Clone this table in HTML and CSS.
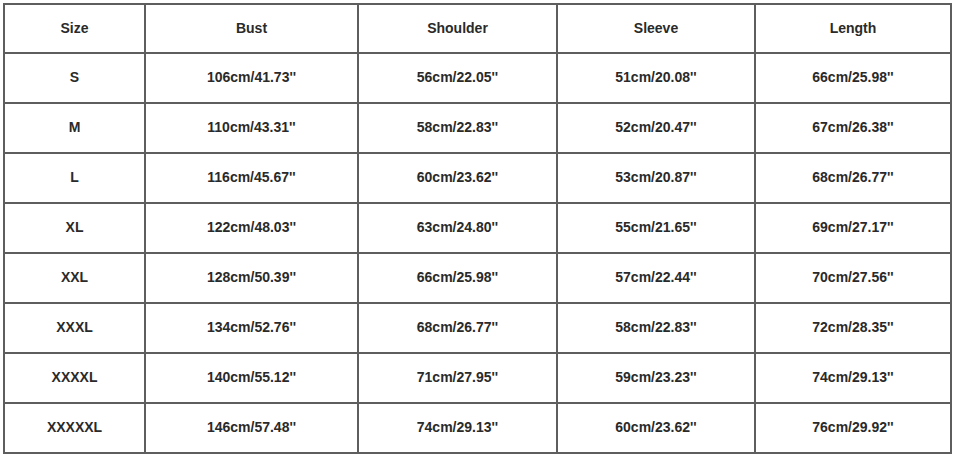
FILE: index.html
```html
<!DOCTYPE html>
<html>
<head>
<meta charset="utf-8">
<link rel="stylesheet" href="styles.css">
</head>
<body>
<div class="chart">
  <div class="cell">Size</div><div class="cell">Bust</div><div class="cell">Shoulder</div><div class="cell">Sleeve</div><div class="cell">Length</div>
  <div class="cell">S</div><div class="cell">106cm/41.73''</div><div class="cell">56cm/22.05''</div><div class="cell">51cm/20.08''</div><div class="cell">66cm/25.98''</div>
  <div class="cell">M</div><div class="cell">110cm/43.31''</div><div class="cell">58cm/22.83''</div><div class="cell">52cm/20.47''</div><div class="cell">67cm/26.38''</div>
  <div class="cell">L</div><div class="cell">116cm/45.67''</div><div class="cell">60cm/23.62''</div><div class="cell">53cm/20.87''</div><div class="cell">68cm/26.77''</div>
  <div class="cell">XL</div><div class="cell">122cm/48.03''</div><div class="cell">63cm/24.80''</div><div class="cell">55cm/21.65''</div><div class="cell">69cm/27.17''</div>
  <div class="cell">XXL</div><div class="cell">128cm/50.39''</div><div class="cell">66cm/25.98''</div><div class="cell">57cm/22.44''</div><div class="cell">70cm/27.56''</div>
  <div class="cell">XXXL</div><div class="cell">134cm/52.76''</div><div class="cell">68cm/26.77''</div><div class="cell">58cm/22.83''</div><div class="cell">72cm/28.35''</div>
  <div class="cell">XXXXL</div><div class="cell">140cm/55.12''</div><div class="cell">71cm/27.95''</div><div class="cell">59cm/23.23''</div><div class="cell">74cm/29.13''</div>
  <div class="cell">XXXXXL</div><div class="cell">146cm/57.48''</div><div class="cell">74cm/29.13''</div><div class="cell">60cm/23.62''</div><div class="cell">76cm/29.92''</div>
</div>
</body>
</html>
```
FILE: styles.css
```css
html, body {
  margin: 0;
  padding: 0;
  background: #ffffff;
}
body {
  padding: 3px 0 0 3px;
  font-family: "Liberation Sans", Arial, sans-serif;
}
.chart {
  display: inline-grid;
  grid-template-columns: 139px 211px 197px 196px 194px;
  grid-template-rows: 47px repeat(8, 48px);
  gap: 2px;
  padding: 2px;
  background: #5e5e5e;
}
.cell {
  background: #ffffff;
  display: flex;
  align-items: center;
  justify-content: center;
  padding-bottom: 2px;
  font-size: 14px;
  font-weight: bold;
  color: #2a2a2a;
}
```
